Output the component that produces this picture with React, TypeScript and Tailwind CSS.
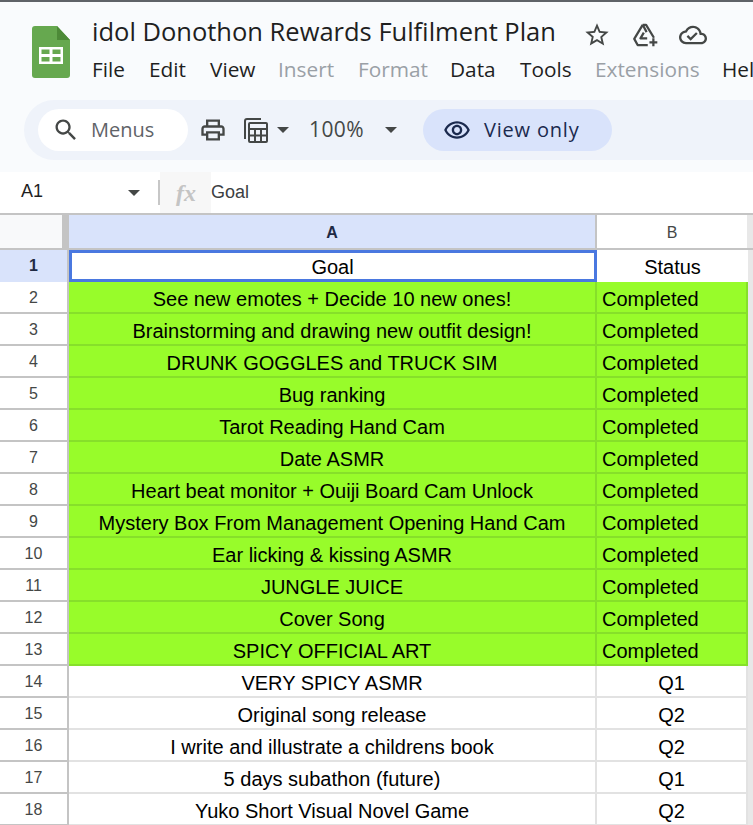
const rows: [number, string, string][] = [
  [2, 'See new emotes + Decide 10 new ones!', 'Completed'],
  [3, 'Brainstorming and drawing new outfit design!', 'Completed'],
  [4, 'DRUNK GOGGLES and TRUCK SIM', 'Completed'],
  [5, 'Bug ranking', 'Completed'],
  [6, 'Tarot Reading Hand Cam', 'Completed'],
  [7, 'Date ASMR', 'Completed'],
  [8, 'Heart beat monitor + Ouiji Board Cam Unlock', 'Completed'],
  [9, 'Mystery Box From Management Opening Hand Cam', 'Completed'],
  [10, 'Ear licking & kissing ASMR', 'Completed'],
  [11, 'JUNGLE JUICE', 'Completed'],
  [12, 'Cover Song', 'Completed'],
  [13, 'SPICY OFFICIAL ART', 'Completed'],
  [14, 'VERY SPICY ASMR', 'Q1'],
  [15, 'Original song release', 'Q2'],
  [16, 'I write and illustrate a childrens book', 'Q2'],
  [17, '5 days subathon (future)', 'Q1'],
  [18, 'Yuko Short Visual Novel Game', 'Q2'],
];

const menus = [
  { label: 'File', off: false, w: 'w-[57px]' },
  { label: 'Edit', off: false, w: 'w-[61px]' },
  { label: 'View', off: false, w: 'w-[68px]' },
  { label: 'Insert', off: true, w: 'w-[80px]' },
  { label: 'Format', off: true, w: 'w-[92px]' },
  { label: 'Data', off: false, w: 'w-[70px]' },
  { label: 'Tools', off: false, w: 'w-[75px]' },
  { label: 'Extensions', off: true, w: 'w-[127px]' },
  { label: 'Help', off: false, w: 'w-[40px]' },
];

function SheetsLogo() {
  return (
    <svg width="38" height="52" viewBox="0 0 38 52">
      <path d="M3 0h22l13 14v35a3 3 0 0 1-3 3H3a3 3 0 0 1-3-3V3a3 3 0 0 1 3-3z" fill="#66a84f" />
      <path d="M25 0l13 14H25z" fill="#4d8a38" />
      <path d="M7 21h24v17H7z M9.5 23.5v4.5h8v-4.5z M20.5 23.5v4.5h8v-4.5z M9.5 31v4.5h8V31z M20.5 31v4.5h8V31z" fill="#fff" fillRule="evenodd" />
    </svg>
  );
}

function Caret({ color = '#444746' }: { color?: string }) {
  return (
    <svg width="12" height="6" viewBox="0 0 12 6">
      <path d="M0 0h12L6 6z" fill={color} />
    </svg>
  );
}

export default function App() {
  return (
    <div className="h-[825px] w-[753px] overflow-hidden bg-white font-['Liberation_Sans',sans-serif]">
      <div className="h-[2px] bg-[#5f6368]" />

      <div className="h-[170px] bg-[#f9fbfd]">
        <div className="flex h-[98px]">
          <div className="ml-[32px] mt-[24px]">
            <SheetsLogo />
          </div>
          <div className="ml-[22px] min-w-0 flex-1 font-['Open_Sans',sans-serif] whitespace-nowrap">
            <div className="flex h-[50px] items-center pt-[12px]">
              <span className="-mt-[4px] w-[490px] text-[25.5px] leading-[30px] text-[#1f1f1f]">idol Donothon Rewards Fulfilment Plan</span>
              <svg className="mt-[4px] ml-[1px]" width="28" height="28" viewBox="0 0 24 24" fill="#444746">
                <path d="M22 9.24l-7.19-.62L12 2 9.19 8.63 2 9.24l5.46 4.73L5.82 21 12 17.27 18.18 21l-1.63-7.03L22 9.24zM12 15.4l-3.76 2.27 1-4.28-3.32-2.88 4.38-.38L12 6.1l1.71 4.04 4.38.38-3.32 2.88 1 4.28L12 15.4z" />
              </svg>
              <svg className="mt-[4px] ml-[21px]" width="27" height="27" viewBox="0 0 24 24" fill="none" stroke="#444746" strokeWidth="2">
                <path d="M9.5 2.5h3l7 11.5M9.5 2.5L2 15l3 5.5h9M9.5 2.5L13 9M10.5 9.5l-3 5h6" strokeLinejoin="round" />
                <path d="M19 14.5v7M15.5 18h7" />
              </svg>
              <svg className="mt-[4px] ml-[20px]" width="28" height="28" viewBox="0 0 24 24" fill="#444746">
                <path d="M19.35 10.04C18.67 6.59 15.64 4 12 4 9.11 4 6.6 5.64 5.35 8.04 2.34 8.36 0 10.91 0 14c0 3.31 2.69 6 6 6h13c2.76 0 5-2.24 5-5 0-2.64-2.05-4.78-4.65-4.96zM19 18H6c-2.21 0-4-1.79-4-4 0-2.05 1.53-3.76 3.56-3.97l1.07-.11.5-.95C8.08 7.14 9.94 6 12 6c2.62 0 4.88 1.86 5.39 4.43l.3 1.5 1.53.11c1.56.1 2.78 1.41 2.78 2.96 0 1.65-1.35 3-3 3zm-9-3.82l-2.09-2.09L6.5 13.5 10 17l6.01-6.01-1.41-1.41z" />
              </svg>
            </div>
            <div className="flex h-[34px] items-center text-[20.8px] leading-[24px]">
              {menus.map((m) => (
                <span key={m.label} className={`${m.w} shrink-0 ${m.off ? 'text-[#9aa0a6]' : 'text-[#1f1f1f]'}`}>
                  {m.label}
                </span>
              ))}
            </div>
          </div>
        </div>

        <div className="ml-[24px] flex h-[60px] items-center rounded-l-[30px] bg-[#eff3fa] pl-[14px] font-['Open_Sans',sans-serif]">
          <div className="flex h-[42px] w-[150px] items-center rounded-full bg-white pl-[14px]">
            <svg width="28" height="28" viewBox="0 0 24 24" fill="#444746">
              <path d="M15.5 14h-.79l-.28-.27C15.41 12.59 16 11.11 16 9.5 16 5.91 13.09 3 9.5 3S3 5.91 3 9.5 5.91 16 9.5 16c1.61 0 3.09-.59 4.23-1.57l.27.28v.79l5 4.99L20.49 19l-4.99-5zm-6 0C7.01 14 5 11.99 5 9.5S7.01 5 9.5 5 14 7.01 14 9.5 11.99 14 9.5 14z" />
            </svg>
            <span className="ml-[11px] text-[20px] text-[#5f6368]">Menus</span>
          </div>
          <svg className="ml-[11px]" width="28" height="28" viewBox="0 0 24 24" fill="#444746">
            <path d="M19 8h-1V3H6v5H5c-1.66 0-3 1.34-3 3v6h4v4h12v-4h4v-6c0-1.66-1.34-3-3-3zM8 5h8v3H8V5zm8 14H8v-4h8v4zm4-4h-2v-2H6v2H4v-4c0-.55.45-1 1-1h14c.55 0 1 .45 1 1v4z" />
          </svg>
          <svg className="ml-[15px]" width="28" height="28" viewBox="0 0 28 28" fill="none" stroke="#444746" strokeWidth="2">
            <path d="M3 23V5a2 2 0 0 1 2-2h14" />
            <rect x="7" y="7" width="18" height="19" rx="1" />
            <path d="M7 13h18M13 13v13M19 13v13M7 19.5h18" />
          </svg>
          <span className="ml-[7px]">
            <Caret />
          </span>
          <span className="ml-[20px] text-[21px] tracking-[0.4px] text-[#444746]">100%</span>
          <span className="ml-[21px]">
            <Caret />
          </span>
          <div className="ml-[26px] flex h-[42px] w-[189px] items-center rounded-full bg-[#d9e3fb] pl-[20px]">
            <svg width="28" height="28" viewBox="0 0 24 24" fill="#1b2a4e">
              <path d="M12 6.5c3.79 0 7.17 2.13 8.82 5.5-1.65 3.37-5.02 5.5-8.82 5.5S4.83 15.37 3.18 12C4.83 8.63 8.21 6.5 12 6.5m0-2C7 4.5 2.73 7.61 1 12c1.73 4.39 6 7.5 11 7.5s9.27-3.11 11-7.5c-1.73-4.39-6-7.5-11-7.5zm0 5c1.38 0 2.5 1.12 2.5 2.5s-1.12 2.5-2.5 2.5-2.5-1.12-2.5-2.5 1.12-2.5 2.5-2.5m0-2c-2.48 0-4.5 2.02-4.5 4.5s2.02 4.5 4.5 4.5 4.5-2.02 4.5-4.5-2.02-4.5-4.5-4.5z" />
            </svg>
            <span className="ml-[13px] text-[20px] font-medium tracking-[0.8px] text-[#1b2a4e]">View only</span>
          </div>
        </div>
        <div className="h-[12px]" />
      </div>

      <div className="flex h-[41px] items-center bg-white">
        <span className="ml-[21px] w-[107px] pb-[2px] text-[18px] text-[#1f1f1f]">A1</span>
        <Caret />
        <span className="ml-[18px] h-[25px] w-[2px] bg-[#c7c7c7]" />
        <span className="flex h-[41px] w-[51px] items-center justify-center bg-[#f7f7f7] pl-[1px] font-['Liberation_Serif',serif] text-[24px] font-bold italic text-[#c4c4c4]">
          fx
        </span>
        <span className="pb-[1px] text-[18px] text-[#3c4043]">Goal</span>
      </div>

      <div className="flex h-[37px] border-t-2 border-b-2 border-[#c4c4c4] bg-white">
        <div className="w-[62px] bg-[#f8f9fa]" />
        <div className="w-[7px] bg-[#c4c4c4]" />
        <div className="flex w-[526px] items-center justify-center bg-[#d9e3fb] pt-[2px] text-[16px] font-bold text-[#1f2a44]">A</div>
        <div className="w-[2px] bg-[#c4c4c4]" />
        <div className="flex w-[150px] items-center justify-center pt-[2px] text-[16px] text-[#444746]">B</div>
        <div className="w-[6px] bg-[#e8e8e8]" />
      </div>

      <div className="flex h-[32px]">
        <div className="flex w-[69px] items-center justify-center border-r-2 border-[#c4c4c4] bg-[#d9e3fb] text-[16px] font-bold text-[#1f2a44]">1</div>
        <div className="flex w-[528px] items-center justify-center border-[3px] border-[#4a78e0] pt-[2px] pr-[1px] text-[20px] text-black">Goal</div>
        <div className="flex w-[151px] items-center justify-center pt-[2px] text-[20px] text-black">Status</div>
        <div className="w-[5px] bg-[#e8e8e8]" />
      </div>

      {rows.map(([n, goal, status]) => {
        const done = status === 'Completed';
        return (
          <div key={n} className="flex h-[32px]">
            <div className="flex w-[69px] items-center justify-center border-r-2 border-b-2 border-[#c4c4c4] bg-white pt-[2px] text-[16px] text-[#444746]">{n}</div>
            {done ? (
              <>
                <div className="flex w-[528px] items-center justify-center border-r-2 border-b-2 border-[#86e02a] bg-[#98fc2a] pt-[4px] text-[20px] text-black">{goal}</div>
                <div className="flex w-[151px] items-center border-r-2 border-b-2 border-[#86e02a] bg-[#98fc2a] pt-[4px] pl-[5px] text-[20px] text-black">{status}</div>
                <div className="w-[5px] bg-[#e8e8e8]" />
              </>
            ) : (
              <>
                <div className="flex w-[528px] items-center justify-center border-r-2 border-b-2 border-[#e2e2e2] pt-[4px] text-[20px] text-black">{goal}</div>
                <div className="flex w-[151px] items-center justify-center border-r-2 border-b-2 border-[#e2e2e2] pt-[4px] text-[20px] text-black">{status}</div>
                <div className="w-[5px] bg-[#e8e8e8]" />
              </>
            )}
          </div>
        );
      })}
    </div>
  );
}
